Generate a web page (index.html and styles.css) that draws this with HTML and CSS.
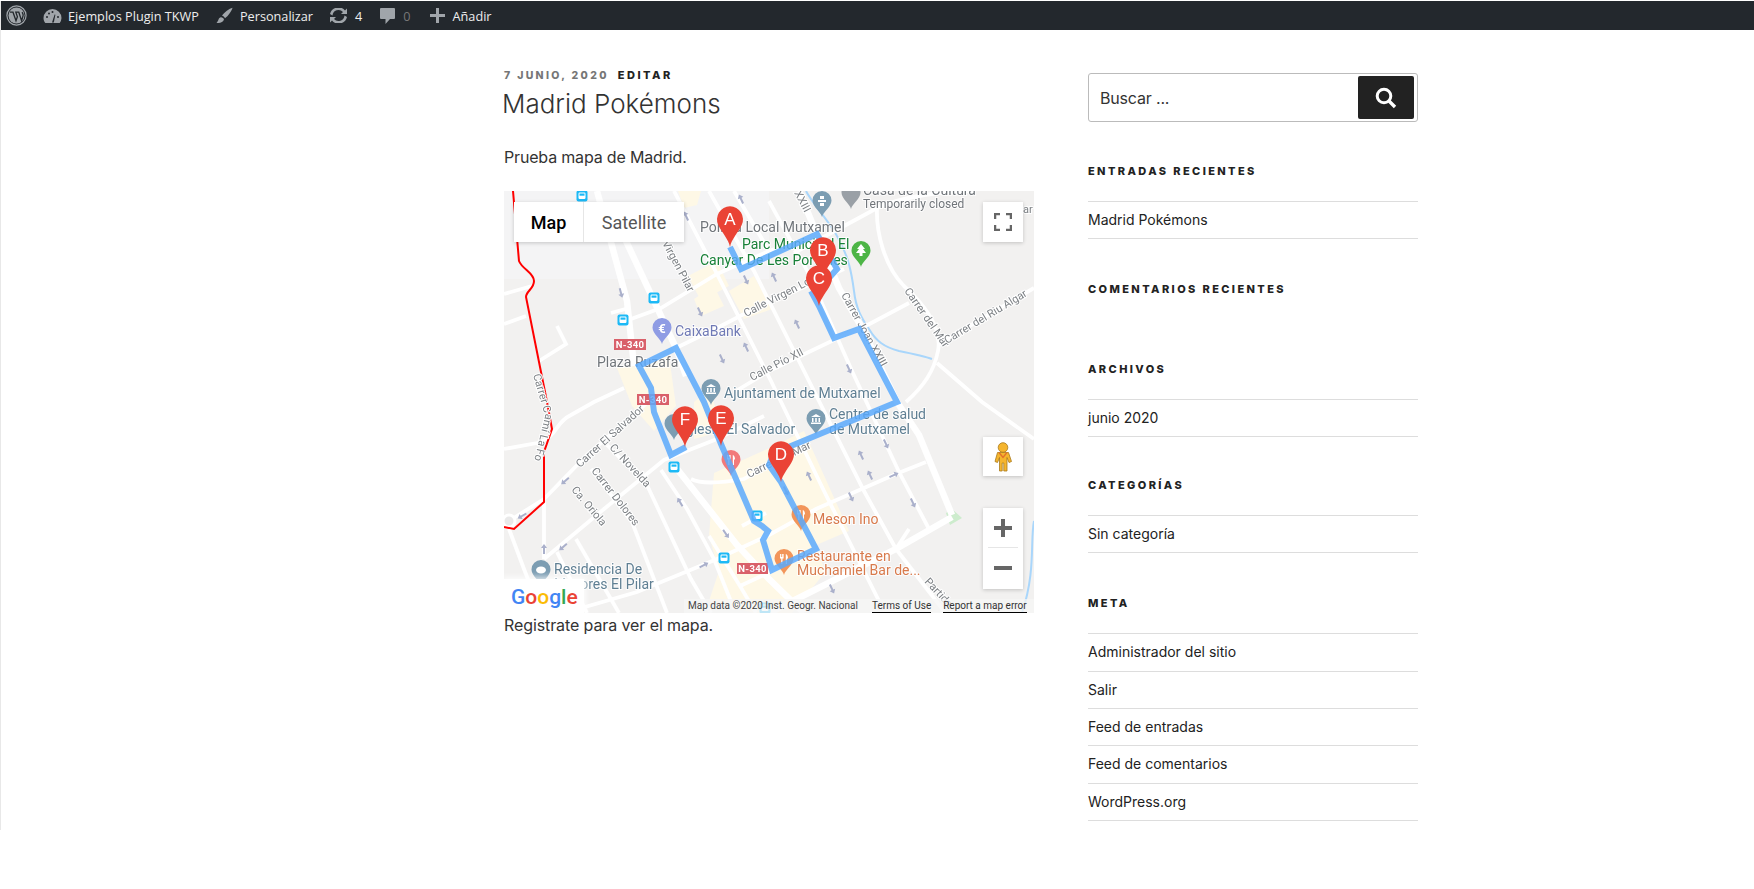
FILE: index.html
```html
<!DOCTYPE html>
<html lang="es">
<head>
<meta charset="utf-8">
<title>Madrid Pokémons</title>
<link rel="stylesheet" href="styles.css">
</head>
<body>
<div class="frame">
  <nav class="adminbar">
    <span class="ab-item ab-wp">
      <svg class="ab-icon" width="21" height="21" viewBox="0 0 21 21"><circle cx="10.5" cy="10.5" r="9.6" fill="none" stroke="#a0a5aa" stroke-width="1.2"/><circle cx="10.5" cy="10.5" r="8" fill="#a0a5aa"/><path d="M4 7.2h3l3 8.6 1.4-4-1.6-4.6h3l2.8 8.6 1.5-5.2c.4-1.4-.4-2.4-1-3.400" fill="none" stroke="#23282d" stroke-width="1.3"/></svg>
    </span>
    <span class="ab-item ab-site">
      <svg class="ab-icon" width="19" height="16" viewBox="0 0 19 16"><path d="M9.500 1a9 9 0 0 0-9 9c0 2 .7 3.800 1.800 5h14.400a9 9 0 0 0 1.800-5 9 9 0 0 0-9-9z" fill="#a0a5aa"/><path d="M9 14.500l2.600-8 .8.300-1.600 7.700z" fill="#23282d"/><circle cx="4" cy="9" r="1" fill="#23282d"/><circle cx="6" cy="5.500" r="1" fill="#23282d"/><circle cx="9.500" cy="4" r="1" fill="#23282d"/><circle cx="15" cy="9" r="1" fill="#23282d"/></svg>
      <span>Ejemplos Plugin TKWP</span>
    </span>
    <span class="ab-item ab-custom">
      <svg class="ab-icon" width="17" height="17" viewBox="0 0 17 17"><path d="M16.500 .8c-3 .6-8.500 4.700-10.500 8 1.500.3 2.600 1.300 3 2.500 3-2 7-7.700 7.500-10.500z" fill="#a0a5aa"/><path d="M5 10.200c-2.800.3-2 3.500-4.500 5.500 3 .7 6.800-.2 7.500-3.500-.4-1-1.600-2-3-2z" fill="#a0a5aa"/></svg>
      <span>Personalizar</span>
    </span>
    <span class="ab-item ab-updates">
      <svg class="ab-icon" width="19" height="15" viewBox="0 0 19 15"><path d="M3.500 7.500A6 6 0 0 1 14 4l-2 2h6V.5l-2 2A8.600 8.600 0 0 0 1 6z" fill="#a0a5aa"/><path d="M15.500 7.500A6 6 0 0 1 5 11l2-2H1v5.500l2-2A8.600 8.600 0 0 0 18 9z" fill="#a0a5aa"/></svg>
      <span>4</span>
    </span>
    <span class="ab-item ab-comments">
      <svg class="ab-icon" width="15" height="16" viewBox="0 0 15 16"><path d="M1 0h13a1 1 0 0 1 1 1v9a1 1 0 0 1-1 1h-4l-4.500 5v-5H1a1 1 0 0 1-1-1V1a1 1 0 0 1 1-1z" fill="#a0a5aa"/></svg>
      <span class="ab-dim">0</span>
    </span>
    <span class="ab-item ab-new">
      <svg class="ab-icon" width="15" height="15" viewBox="0 0 15 15"><path d="M6 0h3v6h6v3H9v6H6V9H0V6h6z" fill="#a0a5aa"/></svg>
      <span>Añadir</span>
    </span>
  </nav>

  <div class="layout">
    <main class="content">
      <p class="meta"><span class="date">7 JUNIO, 2020</span><span class="edit">EDITAR</span></p>
      <h1 class="title">Madrid Pokémons</h1>
      <p class="lead">Prueba mapa de Madrid.</p>

      <div class="map">
        <svg class="map-art" width="530" height="422" viewBox="0 0 530 422">
          <defs>
            <g id="arrow"><path d="M0 -5L3 -1H1V5H-1V-1H-3Z" fill="#aab0cb"/></g>
            <g id="bus"><rect x="-5.500" y="-5.500" width="11" height="11" rx="2" fill="#1cb9f6"/><rect x="-3.500" y="-3.500" width="7" height="6.500" rx="1.200" fill="#fff"/><rect x="-2.500" y="-2.500" width="5" height="2.200" fill="#1cb9f6"/></g>
            <path id="poi" d="M0 16C-1 11-9.500 6-9.500-.5A9.500 9.500 0 1 1 9.500-.5C9.500 6 1 11 0 16Z"/>
            <path id="pin" d="M0 28C-1.500 20-8 14-11.700 6A13 13 0 1 1 11.700 6C8 14 1.500 20 0 28Z" fill="#ea4335"/>
            <g id="bank"><path d="M-5-2L0-5 5-2ZM-4-1h1.500v4H-4zM-.8-1H.8v4H-.8zM2.500-1H4v4H2.500zM-5 3.500H5V5H-5z" fill="#fff"/></g>
            <g id="fork"><path d="M-4-5v4.500h1.200V5h1.300V-.5h1.100V-5h-.9v3H-1.500v-3h-.8v3h-.8v-3zM2-5c1.500.5 2 2.500 2 4.500H3V5H1.800V-5z" fill="#fff"/></g>
          </defs>

          <rect class="bg" width="530" height="422"/>
          <rect class="bg-top" width="265" height="88"/>

          <g class="yellow">
            <polygon points="174,0 197,0 193,14 180,17"/>
            <polygon points="184,85 213,70 225,95 197,110"/>
            <polygon points="190,108 210,95 220,115 197,125"/>
            <polygon points="225,100 250,85 268,118 240,128"/>
            <polygon points="113,177 165,165 172,215 150,240 128,215"/>
            <polygon points="190,211 205,198 220,240 190,248"/>
            <polygon points="210,282 270,255 300,240 345,340 310,355 322,380 288,422 250,422 205,410 215,380 205,345"/>
          </g>
          <polygon class="park" points="442,322 448,318 458,327 446,334"/>

          <g class="river">
            <path d="M302,0 C308,12 325,30 333,45 C345,65 348,85 350,100 C352,118 358,128 365,138 C372,150 380,156 395,160 C410,163 420,165 428,168"/>
            <path d="M530,330 C526,350 532,380 518,422"/>
          </g>

          <g class="roads-minor">
            <path d="M373,17 C372,40 380,75 400,95 C425,118 438,140 434,160 C430,180 420,195 402,211"/>
            <path d="M290,62 C330,40 350,30 373,17 C400,5 440,0 470,0"/>
            <path d="M127,128 L157,117 L213,83 L265,60 L315,43"/>
            <path d="M172,157 L213,137 L265,110 L298,97 L340,78"/>
            <path d="M232,200 L265,180 L332,148 L358,137 L405,112"/>
            <path d="M435,153 L530,97"/>
            <path d="M433,172 L478,211 L530,248"/>
            <path d="M0,103 L28,95"/>
            <path d="M0,133 L22,125"/>
            <path d="M35,170 L62,153 L53,135"/>
            <path d="M107,122 L125,117"/>
            <path d="M0,258 L33,252 C55,245 50,232 67,224 L90,211 L120,197"/>
            <path d="M5,330 L40,308 L83,264 L133,221 L150,205"/>
            <path d="M40,368 L100,318 L160,269 L213,248 L260,225"/>
            <path d="M40,311 L40,368"/>
            <path d="M5,338 L20,378 L37,422"/>
            <path d="M53,361 L83,422"/>
            <path d="M72,348 L115,422"/>
            <path d="M87,278 L128,331 L163,422"/>
            <path d="M103,254 L143,294 L187,388 L207,422"/>
            <path d="M157,279 L183,318 L210,368 L230,418"/>
            <path d="M60,422 L133,401 L213,368 L265,344 L312,318 L392,283 L422,271"/>
            <path d="M187,288 Q200,295 240,288 L300,255"/>
            <path d="M170,0 L213,83 L267,190 L320,300 L375,410"/>
            <path d="M205,0 L250,80 L300,180 L360,300 L392,358"/>
            <path d="M265,10 L305,83 L348,180 L395,281 L425,338"/>
            <path d="M230,0 L265,60"/>
            <path d="M392,358 L405,338"/>
            <path d="M392,358 L440,420"/>
            <path d="M238,335 L262,322"/>
            <path d="M236,395 L300,365"/>
            <path d="M205,345 L236,395 L252,422"/>
          </g>
          <g class="roads-major">
            <path d="M93,0 L123,110 L130,175"/>
            <path d="M108,20 L172,157 L182,185"/>
            <path d="M170,274 L233,354 L265,388 L300,422"/>
            <path d="M295,0 L335,97 L358,137 L393,211 L415,244 L448,324"/>
            <path d="M448,326 L392,358 L265,422"/>
          </g>
          <circle class="rbt" cx="5" cy="330" r="6"/>

          <path class="redline" d="M9,0 L13,47 L15,70 C18,78 30,82 30,90 C30,98 22,100 22,106 L43,211 L48,238 L40,261 L40,311 L10,338 L0,336"/>

          <use href="#arrow" transform="translate(117 102) rotate(165)"/>
          <use href="#arrow" transform="translate(196 121) rotate(155)"/>
          <use href="#arrow" transform="translate(242 89) rotate(155)"/>
          <use href="#arrow" transform="translate(242 156) rotate(-25)"/>
          <use href="#arrow" transform="translate(218 168) rotate(155)"/>
          <use href="#arrow" transform="translate(182 25) rotate(-25)"/>
          <use href="#arrow" transform="translate(237 8) rotate(-25)"/>
          <use href="#arrow" transform="translate(270 86) rotate(-25)"/>
          <use href="#arrow" transform="translate(293 133) rotate(-25)"/>
          <use href="#arrow" transform="translate(345 178) rotate(155)"/>
          <use href="#arrow" transform="translate(61 290) rotate(-130)"/>
          <use href="#arrow" transform="translate(18 325) rotate(-120)"/>
          <use href="#arrow" transform="translate(40 358)"/>
          <use href="#arrow" transform="translate(59 356) rotate(-130)"/>
          <use href="#arrow" transform="translate(176 311) rotate(-30)"/>
          <use href="#arrow" transform="translate(222 343) rotate(145)"/>
          <use href="#arrow" transform="translate(200 374) rotate(62)"/>
          <use href="#arrow" transform="translate(282 300) rotate(155)"/>
          <use href="#arrow" transform="translate(305 285) rotate(-25)"/>
          <use href="#arrow" transform="translate(347 306) rotate(155)"/>
          <use href="#arrow" transform="translate(357 264) rotate(-25)"/>
          <use href="#arrow" transform="translate(366 284) rotate(-25)"/>
          <use href="#arrow" transform="translate(382 253) rotate(155)"/>
          <use href="#arrow" transform="translate(390 284) rotate(65)"/>
          <use href="#arrow" transform="translate(409 312) rotate(155)"/>
          <use href="#arrow" transform="translate(328 398) rotate(155)"/>

          <g class="st">
            <text transform="translate(290 2) rotate(62)">XXIII</text>
            <text transform="translate(337 104) rotate(61)">Carrer Joan XXIII</text>
            <text transform="translate(400 100) rotate(55)">Carrer del Mar</text>
            <text transform="translate(443 153) rotate(-31)">Carrer del Riu Algar</text>
            <text transform="translate(242 126) rotate(-27)">Calle Virgen Loreto</text>
            <text transform="translate(248 190) rotate(-27)">Calle Pío XII</text>
            <text transform="translate(158 52) rotate(62)">Virgen Pilar</text>
            <text transform="translate(76 277) rotate(-42)">Carrer El Salvador</text>
            <text transform="translate(105 257) rotate(47)">C/ Novelda</text>
            <text transform="translate(87 280) rotate(52)">Carrer Dolores</text>
            <text transform="translate(67 299) rotate(50)">Ca. Oriola</text>
            <text transform="translate(245 287) rotate(-26)">Carrer del Mar</text>
            <text transform="translate(420 391) rotate(47)">Partida</text>
            <text x="519" y="22">ar</text>
            <path id="foia" d="M29,184 L41,225 L30,270" fill="none"/>
            <text><textPath href="#foia">Carrer Camí La Foia</textPath></text>
          </g>

          <g class="lb lb-gray">
            <text x="359" y="4">Casa de la Cultura</text>
            <text x="359" y="17" class="lb-small">Temporarily closed</text>
            <text x="196" y="41">Policía Local Mutxamel</text>
            <text x="93" y="176">Plaza Ruzafa</text>
          </g>
          <g class="lb lb-green">
            <text x="238" y="58">Parc Municipal El</text>
            <text x="196" y="74">Canyar De Les Portelles</text>
          </g>
          <g class="lb lb-violet"><text x="171" y="145">CaixaBank</text></g>
          <g class="lb lb-slate">
            <text x="220" y="207">Ajuntament de Mutxamel</text>
            <text x="178" y="243">Iglesia El Salvador</text>
            <text x="325" y="228">Centre de salud</text>
            <text x="325" y="243">de Mutxamel</text>
            <text x="50" y="383">Residencia De</text>
            <text x="50" y="398">Mayores El Pilar</text>
          </g>
          <g class="lb lb-orange">
            <text x="309" y="333">Meson Ino</text>
            <text x="293" y="370">Restaurante en</text>
            <text x="293" y="384">Muchamiel Bar de...</text>
          </g>

          <use href="#poi" class="p-slate" x="318" y="10"/>
          <path d="M314 9h8v2h-8zM316 5h4v3h-4zM316 12h4v3h-4z" fill="#fff"/>
          <use href="#poi" class="p-gray" x="347" y="2"/>
          <use href="#poi" class="p-green" x="357" y="60"/>
          <path d="M357 53l4 5h-2l3 4h-3.500v3h-3v-3H352l3-4h-2z" fill="#fff"/>
          <use href="#poi" class="p-violet" x="158" y="137"/>
          <text class="p-glyph" x="158" y="142">€</text>
          <use href="#poi" class="p-slate" x="207" y="198"/>
          <use href="#bank" x="207" y="198"/>
          <use href="#poi" class="p-slate" x="312" y="228"/>
          <use href="#bank" x="312" y="228"/>
          <use href="#poi" class="p-slate" x="37" y="379"/>
          <ellipse cx="37" cy="379" rx="5" ry="3.500" fill="#fff"/>
          <use href="#poi" class="p-slate" x="170" y="233"/>
          <use href="#poi" class="p-red" x="227" y="269"/>
          <use href="#fork" x="227" y="269"/>
          <use href="#poi" class="p-orange" x="297" y="324"/>
          <use href="#fork" x="297" y="324"/>
          <use href="#poi" class="p-orange" x="280" y="368"/>
          <use href="#fork" x="280" y="368"/>

          <use href="#bus" x="78" y="5"/>
          <use href="#bus" x="150" y="107"/>
          <use href="#bus" x="119" y="129"/>
          <use href="#bus" x="170" y="276"/>
          <use href="#bus" x="220" y="367"/>
          <use href="#bus" x="253" y="325"/>
          <use href="#bus" x="261" y="417"/>

          <g class="shield">
            <rect x="110" y="148" width="32" height="11"/><text x="126" y="157">N-340</text>
            <rect x="133" y="203" width="32" height="11"/><text x="149" y="212">N-340</text>
            <rect x="233" y="372" width="31" height="11"/><text x="248.500" y="381">N-340</text>
          </g>

          <path class="route" d="M226,56 L237,78 L313,43 L333,78 L325,87 M307,100 L315,115 L330,147 L355,138 L393,211 L270,262 L265,274 L277,291 L312,358 L268,379 L259,349 L264,340 L258,335 L250,330 L217,253 L200,211 L172,157 L135,175 L147,197 L150,221 L167,264 L182,256"/>

          <use href="#pin" x="319" y="59"/><text class="pin-l" x="319" y="65">B</text>
          <use href="#pin" x="315" y="87"/><text class="pin-l" x="315" y="93">C</text>
          <use href="#pin" x="226" y="28"/><text class="pin-l" x="226" y="34">A</text>
          <use href="#pin" x="277" y="263"/><text class="pin-l" x="277" y="269">D</text>
          <use href="#pin" x="217" y="227"/><text class="pin-l" x="217" y="233">E</text>
          <use href="#pin" x="181" y="228"/><text class="pin-l" x="181" y="234">F</text>
        </svg>

        <div class="mapbtns">
          <span class="mapbtn mapbtn-on">Map</span>
          <span class="mapbtn">Satellite</span>
        </div>
        <div class="ctl ctl-full">
          <svg width="18" height="18" viewBox="0 0 18 18"><path d="M1 6V1h5M12 1h5v5M17 12v5h-5M6 17H1v-5" fill="none" stroke="#666" stroke-width="2.500"/></svg>
        </div>
        <div class="ctl ctl-peg">
          <svg width="18" height="30" viewBox="0 0 18 30"><circle cx="9" cy="5.500" r="4.800" fill="#f5b52e" stroke="#a87a1c" stroke-width=".8"/><path d="M3.500 10.500h11l3 9-2.500 1-2-5v13.500H9.800v-8H8.200v8H5.500V15.500l-2 5-2.500-1z" fill="#f5b52e" stroke="#a87a1c" stroke-width=".8"/><path d="M5 10.500l4 5 4-5" fill="none" stroke="#e2722a" stroke-width="1.400"/></svg>
        </div>
        <div class="ctl-zoom">
          <div class="zoom-btn"><svg width="18" height="18" viewBox="0 0 18 18"><path d="M7 0h4v7h7v4h-7v7H7v-7H0V7h7z" fill="#666"/></svg></div>
          <div class="zoom-btn"><svg width="18" height="4" viewBox="0 0 18 4"><rect width="18" height="4" fill="#666"/></svg></div>
        </div>
        <div class="glogo"><span class="g-b">G</span><span class="g-r">o</span><span class="g-y">o</span><span class="g-b">g</span><span class="g-g">l</span><span class="g-r">e</span></div>
        <div class="attrib">
          <span class="attrib-data">Map data ©2020 Inst. Geogr. Nacional</span>
          <span class="attrib-link">Terms of Use</span>
          <span class="attrib-link">Report a map error</span>
        </div>
      </div>
      <p class="after">Registrate para ver el mapa.</p>
    </main>

    <aside class="sidebar">
      <form class="search">
        <span class="search-ph">Buscar ...</span>
        <span class="search-btn">
          <svg width="22" height="22" viewBox="0 0 22 22"><circle cx="9" cy="9" r="6.800" fill="none" stroke="#fff" stroke-width="3"/><path d="M14 14l6 6" stroke="#fff" stroke-width="3.400"/></svg>
        </span>
      </form>

      <section class="widget">
        <h2>ENTRADAS RECIENTES</h2>
        <ul><li>Madrid Pokémons</li></ul>
      </section>
      <section class="widget widget-empty">
        <h2>COMENTARIOS RECIENTES</h2>
      </section>
      <section class="widget">
        <h2>ARCHIVOS</h2>
        <ul><li>junio 2020</li></ul>
      </section>
      <section class="widget widget-cat">
        <h2>CATEGORÍAS</h2>
        <ul><li>Sin categoría</li></ul>
      </section>
      <section class="widget">
        <h2>META</h2>
        <ul>
          <li>Administrador del sitio</li>
          <li>Salir</li>
          <li>Feed de entradas</li>
          <li>Feed de comentarios</li>
          <li>WordPress.org</li>
        </ul>
      </section>
    </aside>
  </div>
</div>
</body>
</html>
```

FILE: styles.css
```css
* { box-sizing: border-box; }
html, body { margin: 0; padding: 0; background: #fff; }
body { font-family: "Inter", "Liberation Sans", sans-serif; color: #333; overflow: hidden; }

.frame { height: 829px; margin-top: 1px; border-left: 1px solid #e8e8e8; }

/* admin bar */
.adminbar { display: flex; align-items: center; height: 29px; background: #23282d; color: #eee; font-family: "Open Sans", sans-serif; font-size: 12.700px; }
.ab-item { display: flex; align-items: center; gap: 7px; }
.ab-icon { display: block; flex: none; }
.ab-wp { margin-left: 5px; }
.ab-site { margin-left: 16px; gap: 6px; }
.ab-custom { margin-left: 17px; }
.ab-updates { margin-left: 16px; }
.ab-comments { margin-left: 18px; gap: 8px; }
.ab-new { margin-left: 19px; gap: 8px; }
.ab-dim { color: #777; }

/* layout */
.layout { display: flex; align-items: flex-start; padding-left: 503px; }
.content { width: 531px; flex: none; padding-top: 35px; }
.sidebar { width: 330px; flex: none; margin-left: 53px; padding-top: 43px; }

.meta { margin: 0; height: 20px; line-height: 20px; font-size: 10.500px; font-weight: 800; letter-spacing: 2.330px; color: #767676; }
.edit { margin-left: 9px; color: #222; font-size: 11px; letter-spacing: 2.500px; }
.title { margin: 0 0 0 -2px; font-size: 26px; line-height: 38px; font-weight: 300; color: #333; }
.lead { margin: 21px 0 0 0; font-size: 16px; line-height: 26px; letter-spacing: -.17px; color: #333; }
.after { margin: 0; font-size: 16px; line-height: 24px; letter-spacing: -.1px; color: #333; }

/* map */
.map { position: relative; width: 530px; height: 422px; margin-top: 21px; overflow: hidden; background: #f2f1f0; }
.map-art { display: block; font-family: "Roboto", sans-serif; filter: blur(.3px); }
.bg { fill: #f2f1f0; }
.bg-top { fill: #f4f4f5; }
.yellow { fill: #fef8e6; }
.park { fill: #cdeccd; }
.river { fill: none; stroke: #a9d6fb; stroke-width: 2; }
.roads-minor { fill: none; stroke: #fff; stroke-width: 3.800; }
.roads-major { fill: none; stroke: #fff; stroke-width: 6.500; }
.rbt { fill: #e9e9e9; stroke: #fff; stroke-width: 3; }
.redline { fill: none; stroke: #f00; stroke-width: 2; }
.route { fill: none; stroke: #5ba9fb; stroke-width: 6; stroke-opacity: .85; stroke-linejoin: miter; }

.st text { font-size: 11px; fill: #7d8185; stroke: #fff; stroke-width: 2; paint-order: stroke; }
.lb text { font-size: 14px; stroke: #fff; stroke-width: 2; stroke-opacity: .8; paint-order: stroke; }
.lb .lb-small { font-size: 12px; }
.lb-gray { fill: #70757a; }
.lb-green { fill: #188038; }
.lb-violet { fill: #6f79b5; }
.lb-slate { fill: #5f7f93; }
.lb-orange { fill: #d87a4c; }
.p-slate { fill: #7c9db2; }
.p-gray { fill: #9aa0a6; }
.p-green { fill: #4db546; }
.p-violet { fill: #8f9ce4; }
.p-red { fill: #f2797a; }
.p-orange { fill: #f2955a; }
.p-glyph { font-size: 13px; font-weight: 700; fill: #fff; text-anchor: middle; }
.shield rect { fill: #d9606a; }
.shield text { font-size: 9.500px; font-weight: 700; fill: #fff; text-anchor: middle; letter-spacing: .3px; }
.pin-l { font-family: "Liberation Sans", sans-serif; font-size: 17px; fill: #fff; text-anchor: middle; }

.mapbtns { position: absolute; left: 10px; top: 11px; display: flex; height: 40px; background: #fff; box-shadow: 0 1px 4px rgba(0,0,0,.2); font-family: "Roboto", sans-serif; font-size: 18px; color: #565656; }
.mapbtn { display: flex; align-items: center; justify-content: center; width: 100px; }
.mapbtn-on { width: 70px; color: #000; font-weight: 500; border-right: 1px solid #e6e6e6; }
.ctl { position: absolute; left: 479px; width: 40px; background: #fff; box-shadow: 0 1px 4px rgba(0,0,0,.2); display: flex; align-items: center; justify-content: center; }
.ctl-full { top: 11px; height: 40px; }
.ctl-peg { top: 246px; height: 39px; }
.ctl-zoom { position: absolute; left: 479px; top: 317px; width: 40px; height: 81px; background: #fff; box-shadow: 0 1px 4px rgba(0,0,0,.2); }
.zoom-btn { display: flex; align-items: center; justify-content: center; height: 40px; }
.zoom-btn:first-child { margin: 0 5px; border-bottom: 1px solid #e6e6e6; }

.glogo { position: absolute; left: 0; bottom: 0; width: 80px; height: 34px; padding: 7px 0 0 7px; background: #fff; box-shadow: 0 0 6px 2px rgba(255,255,255,.8); font-family: "Roboto", sans-serif; font-size: 21px; line-height: 22px; font-weight: 500; }
.g-b { color: #4285f4; }
.g-r { color: #ea4335; }
.g-y { color: #fbbc05; }
.g-g { color: #34a853; }
.attrib { position: absolute; right: 0; bottom: 0; width: 350px; height: 14px; padding-left: 4px; display: flex; gap: 12px; background: rgba(245,245,245,.75); font-family: "Roboto", sans-serif; font-size: 10px; line-height: 13px; color: #444; white-space: nowrap; }
.attrib-data { width: 172px; }
.attrib-link { height: 14px; color: #333; border-bottom: 1px solid #000; }

/* sidebar */
.search { display: flex; align-items: center; justify-content: space-between; height: 49px; padding: 0 3px 0 11px; border: 1px solid #bbb; border-radius: 3px; }
.search-ph { font-size: 16px; letter-spacing: -.17px; color: #333; }
.search-btn { display: flex; align-items: center; justify-content: center; width: 56px; height: 43px; background: #222; border-radius: 2px; }
.widget { margin-top: 41px; }
.widget + .widget { margin-top: 42px; }
.widget + .widget-cat { margin-top: 40px; }
.widget h2 { margin: 0; font-size: 11px; line-height: 16px; font-weight: 800; letter-spacing: 2.400px; color: #222; }
.widget ul { list-style: none; margin: 22px 0 0 0; padding: 0; border-top: 1px solid #ddd; }
.widget li { height: 37.300px; line-height: 36px; font-size: 14px; color: #222; border-bottom: 1px solid #ddd; }
.widget-empty { height: 37.500px; }
```
